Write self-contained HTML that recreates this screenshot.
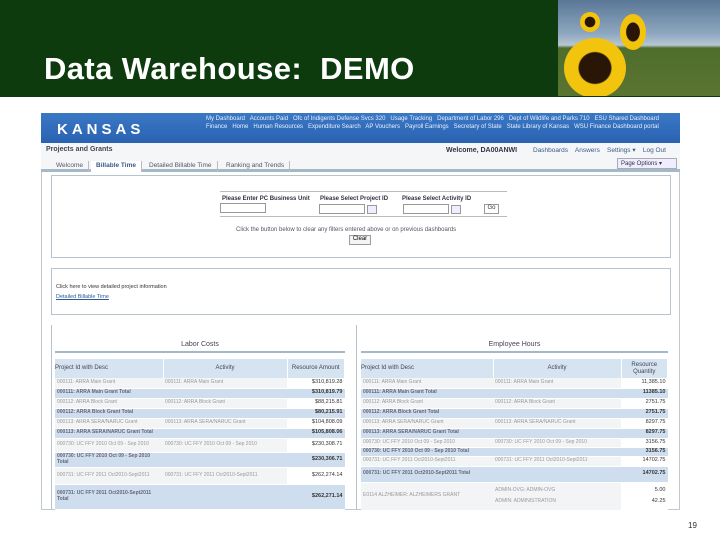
<!DOCTYPE html>
<html><head><meta charset="utf-8"><style>
*{margin:0;padding:0;box-sizing:border-box}
body{width:720px;height:540px;background:#fff;position:relative;overflow:hidden;font-family:"Liberation Sans",sans-serif}
.a{position:absolute}
.hdr{left:0;top:0;width:720px;height:97px;background:#0d3b0e}
.title{left:44px;top:51px;color:#fff;font-size:31px;font-weight:bold;letter-spacing:0.4px}
.sun{left:558px;top:0;width:162px;height:96px;background:linear-gradient(#5a7796 0%,#8ea7c0 35%,#b7c6d2 47%,#4f6d2c 50%,#5b7432 100%);overflow:hidden}
.f{position:absolute;border-radius:50%;background:radial-gradient(#2a1606 0 36%,#f2c40e 39% 100%)}
.ks{left:41px;top:113px;width:639px;height:30px;background:linear-gradient(#3a78c4,#2a62b2)}
.ks .logo{left:16px;top:8px;color:#fff;font-weight:bold;font-size:15px;letter-spacing:4px}
.nav{left:165px;top:2px;width:462px;color:#e8f0ff;font-size:6px;line-height:8px}
.bar{left:41px;top:143px;width:639px;height:29px;background:#f4f6f8;border-bottom:3px solid #a5b8c8}
.sm{font-size:7px;color:#334}
.tab{position:absolute;top:18px;height:11px;font-size:6.5px;padding:1px 5px;color:#556;border-right:1px solid #bbb}
.panel{border:1px solid #b8c4cc;background:#fff}
.clip{overflow:hidden}
table{border-collapse:collapse;font-size:5px;color:#999;table-layout:fixed}
td{padding:0 2px;border-bottom:1px solid #fff;line-height:5.5px;white-space:nowrap;overflow:hidden}
td.wr{white-space:normal}
.b td{background:#cfdeee;color:#667;font-weight:bold}
.w td{background:#f2f4f6}
th{background:#d6e3f0;font-weight:normal;color:#445;font-size:6px;height:19px;border-right:1px solid #fff;line-height:7px}
td.r{text-align:right;color:#333;background:#fff;font-size:5.5px}
.b td.r{background:#cfdeee}
</style></head><body>
<div class="a hdr"></div>
<div class="a title">Data Warehouse:&nbsp; DEMO</div>
<div class="a sun">
<div class="f" style="left:6px;top:38px;width:62px;height:60px"></div>
<div class="f" style="left:22px;top:12px;width:20px;height:20px"></div>
<div class="f" style="left:62px;top:14px;width:26px;height:36px"></div>
</div>
<div class="a ks"><div class="a logo">KANSAS</div>
<div class="a nav">My Dashboard &nbsp; Accounts Paid &nbsp; Ofc of Indigents Defense Svcs 320 &nbsp; Usage Tracking &nbsp; Department of Labor 296 &nbsp; Dept of Wildlife and Parks 710 &nbsp; ESU Shared Dashboard &nbsp; Finance &nbsp; Home &nbsp; Human Resources &nbsp; Expenditure Search &nbsp; AP Vouchers &nbsp; Payroll Earnings &nbsp; Secretary of State &nbsp; State Library of Kansas &nbsp; WSU Finance Dashboard portal</div></div>
<div class="a bar">
<div class="a sm" style="left:5px;top:3px;font-weight:bold;color:#445">Projects and Grants</div>
<div class="a sm" style="left:405px;top:4px;font-weight:bold">Welcome, DA00ANWI</div>
<div class="a sm" style="left:492px;top:3px;color:#3a5a8a;font-size:6.5px">Dashboards &nbsp;&nbsp; Answers &nbsp;&nbsp; Settings ▾ &nbsp;&nbsp; Log Out</div>
<div class="tab" style="left:10px">Welcome</div>
<div class="tab" style="left:50px;background:#fff;font-weight:bold;color:#3a5a8a">Billable Time</div>
<div class="tab" style="left:103px">Detailed Billable Time</div>
<div class="tab" style="left:180px">Ranking and Trends</div>
<div class="a" style="left:576px;top:15px;width:60px;height:11px;border:1px solid #aab;background:#eef;font-size:6px;padding:1px 3px;color:#334">Page Options ▾</div>
</div>
<div class="a" style="left:41px;top:172px;width:639px;height:338px;border:1px solid #c0c8d0;border-top:0"></div>
<div class="a panel" style="left:51px;top:175px;width:620px;height:83px"></div>
<div class="a" style="left:220px;top:191px;width:287px;border-top:1px solid #bbb;border-bottom:1px solid #bbb;height:26px;font-size:6px;font-weight:bold;color:#334">
<div class="a" style="left:2px;top:4px">Please Enter PC Business Unit</div>
<div class="a" style="left:100px;top:4px">Please Select Project ID</div>
<div class="a" style="left:182px;top:4px">Please Select Activity ID</div>
<div class="a" style="left:0;top:11px;width:46px;height:10px;border:1px solid #999"></div>
<div class="a" style="left:99px;top:12px;width:46px;height:10px;border:1px solid #999"></div>
<div class="a" style="left:147px;top:13px;width:10px;height:9px;border:1px solid #999;background:#eef"></div>
<div class="a" style="left:183px;top:12px;width:46px;height:10px;border:1px solid #999"></div>
<div class="a" style="left:231px;top:13px;width:10px;height:9px;border:1px solid #999;background:#eef"></div>
<div class="a" style="left:264px;top:12px;width:15px;height:10px;border:1px solid #999;font-weight:normal;text-align:center">Go</div>
</div>
<div class="a" style="left:236px;top:227px;font-size:6px;color:#556">Click the button below to clear any filters entered above or on previous dashboards</div>
<div class="a" style="left:349px;top:235px;width:22px;height:10px;border:1px solid #999;font-size:6px;text-align:center;background:#f4f4f4">Clear</div>
<div class="a panel" style="left:51px;top:268px;width:620px;height:47px"></div>
<div class="a" style="left:56px;top:284px;font-size:5.5px;color:#333">Click here to view detailed project information</div>
<div class="a" style="left:56px;top:294px;font-size:5.5px;color:#2a5a9a;text-decoration:underline">Detailed Billable Time</div>
<div class="a" style="left:51px;top:325px;width:1px;height:185px;background:#b8c4cc"></div>
<div class="a" style="left:356px;top:325px;width:1px;height:185px;background:#b8c4cc"></div>
<div class="a" style="left:55px;top:341px;width:290px;text-align:center;font-size:7px;color:#445;border-bottom:2px solid #a5b8c8;height:12px">Labor Costs</div>
<div class="a" style="left:361px;top:341px;width:307px;text-align:center;font-size:7px;color:#445;border-bottom:2px solid #a5b8c8;height:12px">Employee Hours</div>
<div class="a clip" style="left:55px;top:359px;width:290px;height:151px">
<table style="width:290px">
<colgroup><col style="width:108px"><col style="width:124px"><col></colgroup>
<tr><th style="text-align:left">Project Id with Desc</th><th>Activity</th><th>Resource Amount</th></tr>
<tr class="w" style="height:10px"><td>000111: ARRA Main Grant</td><td>000111: ARRA Main Grant</td><td class="r">$310,819.28</td></tr>
<tr class="b" style="height:10px"><td>000111: ARRA Main Grant Total</td><td></td><td class="r">$310,819.79</td></tr>
<tr class="w" style="height:10px"><td>000112: ARRA Block Grant</td><td>000112: ARRA Block Grant</td><td class="r">$88,215.81</td></tr>
<tr class="b" style="height:10px"><td>000112: ARRA Block Grant Total</td><td></td><td class="r">$80,215.91</td></tr>
<tr class="w" style="height:10px"><td>000113: ARRA SERA/NARUC Grant</td><td>000113: ARRA SERA/NARUC Grant</td><td class="r">$104,808.09</td></tr>
<tr class="b" style="height:10px"><td>000113: ARRA SERA/NARUC Grant Total</td><td></td><td class="r">$105,808.06</td></tr>
<tr class="w" style="height:14px"><td>000730: UC FFY 2010 Oct 09 - Sep 2010</td><td class="wr">000730: UC FFY 2010 Oct 09 - Sep 2010</td><td class="r">$230,308.71</td></tr>
<tr class="b" style="height:15px"><td class="wr">000730: UC FFY 2010 Oct 09 - Sep 2010 Total</td><td></td><td class="r">$230,306.71</td></tr>
<tr class="w" style="height:17px"><td>000731: UC FFY 2011 Oct2010-Sept2011</td><td class="wr">000731: UC FFY 2011 Oct2010-Sept2011</td><td class="r">$262,274.14</td></tr>
<tr class="b" style="height:25px"><td class="wr">000731: UC FFY 2011 Oct2010-Sept2011 Total</td><td></td><td class="r">$262,271.14</td></tr>
</table></div>
<div class="a clip" style="left:361px;top:359px;width:307px;height:151px">
<table style="width:307px">
<colgroup><col style="width:132px"><col style="width:128px"><col></colgroup>
<tr><th style="text-align:left">Project Id with Desc</th><th>Activity</th><th>Resource Quantity</th></tr>
<tr class="w" style="height:10px"><td>000111: ARRA Main Grant</td><td>000111: ARRA Main Grant</td><td class="r">11,385.10</td></tr>
<tr class="b" style="height:10px"><td>000111: ARRA Main Grant Total</td><td></td><td class="r">11385.10</td></tr>
<tr class="w" style="height:10px"><td>000112: ARRA Block Grant</td><td>000112: ARRA Block Grant</td><td class="r">2751.75</td></tr>
<tr class="b" style="height:10px"><td>000112: ARRA Block Grant Total</td><td></td><td class="r">2751.75</td></tr>
<tr class="w" style="height:10px"><td>000113: ARRA SERA/NARUC Grant</td><td>000113: ARRA SERA/NARUC Grant</td><td class="r">8297.75</td></tr>
<tr class="b" style="height:10px"><td>000113: ARRA SERA/NARUC Grant Total</td><td></td><td class="r">8297.75</td></tr>
<tr class="w" style="height:9px"><td>000730: UC FFY 2010 Oct 09 - Sep 2010</td><td>000730: UC FFY 2010 Oct 09 - Sep 2010</td><td class="r">3156.75</td></tr>
<tr class="b" style="height:9px"><td colspan="2">000730: UC FFY 2010 Oct 09 - Sep 2010 Total</td><td class="r">3156.75</td></tr>
<tr class="w" style="height:10px"><td>000731: UC FFY 2011 Oct2010-Sept2011</td><td>000731: UC FFY 2011 Oct2010-Sept2011</td><td class="r">14702.75</td></tr>
<tr class="b" style="height:16px"><td class="wr">000731: UC FFY 2011 Oct2010-Sept2011 Total</td><td></td><td class="r">14702.75</td></tr>
<tr class="w" style="height:28px"><td>E0114 ALZHEIMER: ALZHEIMERS GRANT</td><td class="wr">ADMIN-OVG: ADMIN-OVG<br><br>ADMIN: ADMINISTRATION</td><td class="r">5.00<br><br>42.25</td></tr>
</table></div>
<div class="a" style="left:688px;top:521px;font-size:8px;color:#333">19</div>
</body></html>
